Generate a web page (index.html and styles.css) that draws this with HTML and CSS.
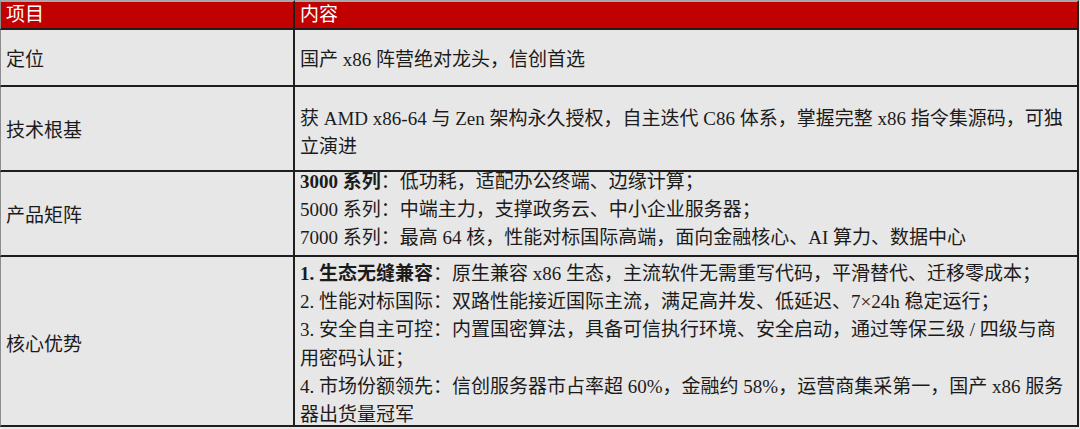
FILE: index.html
```html
<!DOCTYPE html>
<html lang="zh-CN">
<head>
<meta charset="utf-8">
<title>海光 x86</title>
<link rel="stylesheet" href="styles.css">
</head>
<body>
<div class="sheet">
  <div class="cell head key">项目</div>
  <div class="cell head val">内容</div>

  <div class="cell key r1">定位</div>
  <div class="cell val r1">国产 x86 阵营绝对龙头，信创首选</div>

  <div class="cell key r2">技术根基</div>
  <div class="cell val r2">获 AMD x86-64 与 Zen 架构永久授权，自主迭代 C86 体系，掌握完整 x86 指令集源码，可独立演进</div>

  <div class="cell key r3">产品矩阵</div>
  <div class="cell val r3">
    <div class="line"><b>3000 系列</b>：低功耗，适配办公终端、边缘计算；</div>
    <div class="line">5000 系列：中端主力，支撑政务云、中小企业服务器；</div>
    <div class="line">7000 系列：最高 64 核，性能对标国际高端，面向金融核心、AI 算力、数据中心</div>
  </div>

  <div class="cell key r4">核心优势</div>
  <div class="cell val r4">
    <div class="line"><b>1. 生态无缝兼容</b>：原生兼容 x86 生态，主流软件无需重写代码，平滑替代、迁移零成本；</div>
    <div class="line">2. 性能对标国际：双路性能接近国际主流，满足高并发、低延迟、7×24h 稳定运行；</div>
    <div class="line">3. 安全自主可控：内置国密算法，具备可信执行环境、安全启动，通过等保三级 / 四级与商用密码认证；</div>
    <div class="line">4. 市场份额领先：信创服务器市占率超 60%，金融约 58%，运营商集采第一，国产 x86 服务器出货量冠军</div>
  </div>
</div>
</body>
</html>
```

FILE: styles.css
```css
html, body {
  margin: 0;
  padding: 0;
}

body {
  background: #e7e7e7;
  width: 1080px;
  height: 429px;
  overflow: hidden;
  font-family: "Liberation Serif", "Noto Sans CJK SC", serif;
  font-size: 19px;
  line-height: 28px;
  color: #1b1b1b;
}

.sheet {
  display: grid;
  grid-template-columns: 295px 784px;
  width: 1079px;
}

.cell {
  box-sizing: border-box;
  display: flex;
  flex-direction: column;
  justify-content: center;
  padding-left: 5px;
  border-bottom: 2px solid #1e1e1e;
  background: #e7e7e7;
}

.key {
  border-left: 1px solid #8c8c8c;
  border-right: 2px solid #1e1e1e;
  padding-top: 4px;
}

.val {
  border-right: 2px solid #1e1e1e;
}

.head {
  height: 30px;
  border-top: 2px solid #a8a8a8;
  background: #c10000;
  color: #ffffff;
  padding-top: 0;
  line-height: 26px;
}

.r1 { height: 57px; }
.r2 { height: 85px; }
.r3 { height: 85px; }
.r4 { height: 170px; }

.val.r1 { padding-top: 5px; }
.val.r2 { padding-top: 8px; padding-right: 4px; }
.val.r3 { padding-bottom: 7px; }

.val.r4 {
  justify-content: flex-start;
  padding-top: 3px;
  padding-right: 11px;
  line-height: 28.2px;
}

.key.r4 { padding-top: 8px; }

b {
  font-weight: 700;
}
```
